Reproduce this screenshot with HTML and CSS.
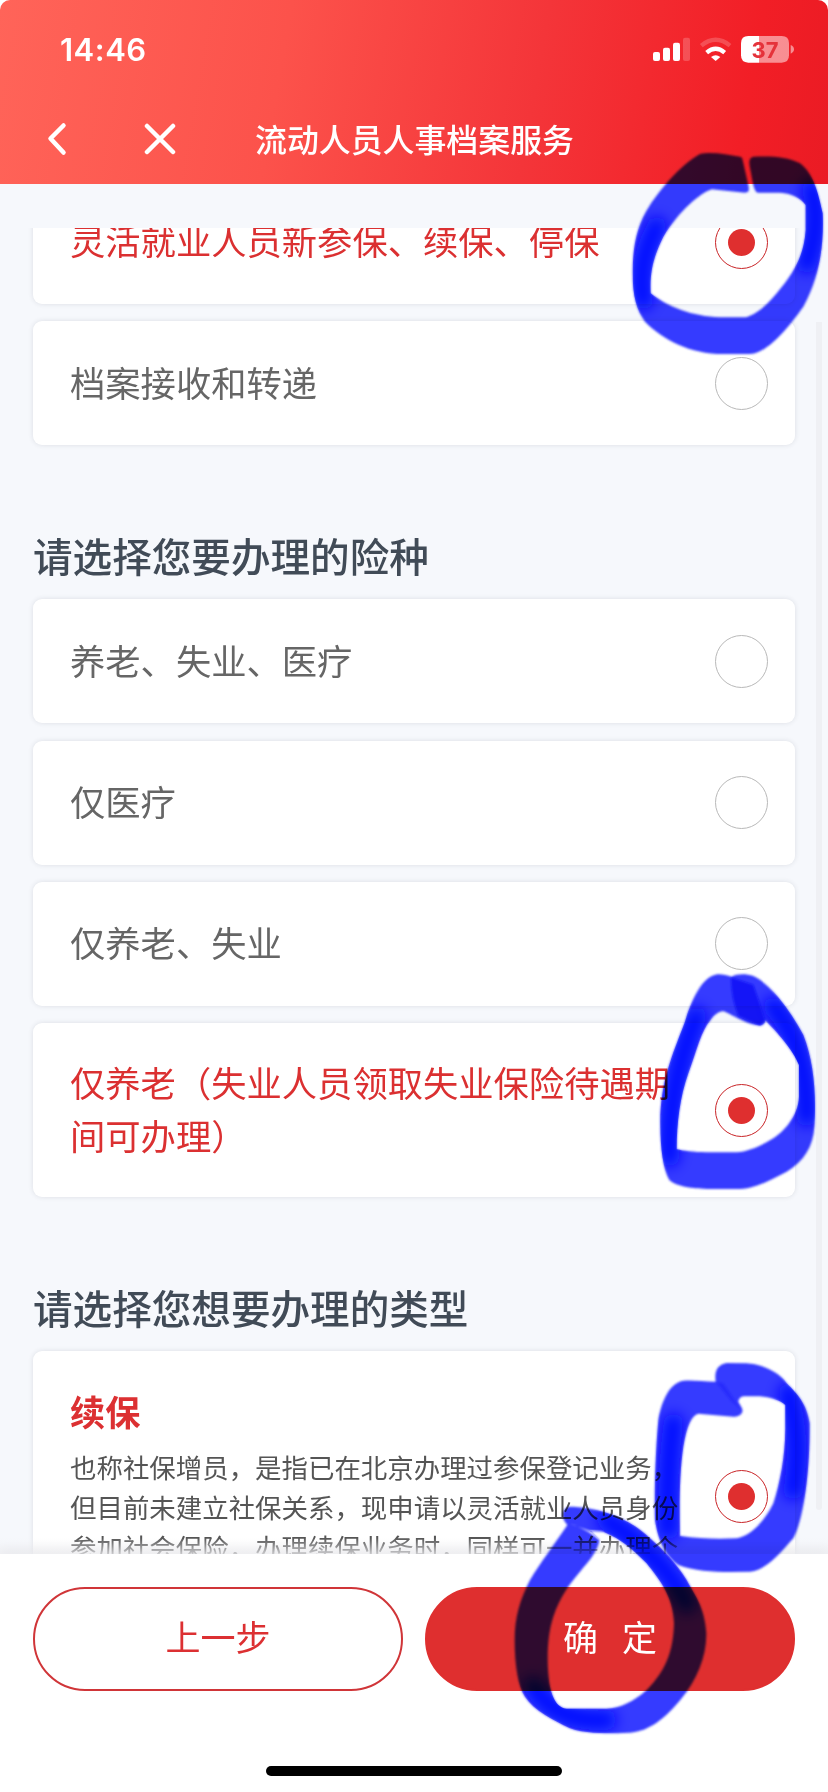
FILE: index.html
```html
<!DOCTYPE html>
<html lang="zh-CN">
<head>
<meta charset="utf-8">
<title>流动人员人事档案服务</title>
<link rel="stylesheet" href="styles.css">
</head>
<body>
<div class="screen">
  <header class="header">
    <div class="status">
      <span class="time">14:46</span>
      <svg class="status-icons" viewBox="0 0 429 90" width="143" height="30">
        <g fill="#fff">
          <rect x="0" y="51" width="21" height="27" rx="6"/>
          <rect x="30" y="38" width="21" height="40" rx="6"/>
          <rect x="60" y="23" width="21" height="55" rx="6"/>
          <rect x="90" y="8" width="21" height="70" rx="6" opacity=".2"/>
          <path d="M188 78 L174 66 Q188 55 202 66Z"/>
        </g>
        <g fill="none" stroke="#fff" stroke-width="13">
          <path d="M161 53 Q188 30 215 53"/>
          <path d="M145 32 Q188 -3 231 32" opacity=".2"/>
        </g>
        <path d="M286 3 H318 V83 H286 Q264 83 264 61 V25 Q264 3 286 3Z" fill="#fff"/>
        <path d="M318 3 H386 Q408 3 408 25 V61 Q408 83 386 83 H318Z" fill="#fff" opacity=".5"/>
        <path d="M413 30 Q423 34 423 43 Q423 52 413 56Z" fill="#fff" opacity=".5"/>
        <text class="battery-level" x="336" y="68" text-anchor="middle">37</text>
      </svg>
    </div>
    <nav class="navbar">
      <div class="nav-actions">
        <svg class="back" viewBox="0 0 20 34" width="20" height="34"><path d="M16.500 3.500 L3.500 16.500 L16.500 30.500"/></svg>
        <svg class="close" viewBox="0 0 32 32" width="32" height="32"><path d="M3 3 L29 29 M29 3 L3 29"/></svg>
      </div>
      <h1 class="title">流动人员人事档案服务</h1>
    </nav>
  </header>

  <main class="scroll">
    <section class="options">
      <div class="card"><p class="label on">灵活就业人员新参保、续保、停保</p><i class="radio checked"></i></div>
      <div class="card"><p class="label">档案接收和转递</p><i class="radio"></i></div>
    </section>
    <h2 class="heading">请选择您要办理的险种</h2>
    <section class="options">
      <div class="card"><p class="label">养老、失业、医疗</p><i class="radio"></i></div>
      <div class="card"><p class="label">仅医疗</p><i class="radio"></i></div>
      <div class="card"><p class="label">仅养老、失业</p><i class="radio"></i></div>
      <div class="card tall"><p class="label on">仅养老（失业人员领取失业保险待遇期间可办理）</p><i class="radio checked"></i></div>
    </section>
    <h2 class="heading">请选择您想要办理的类型</h2>
    <section class="options">
      <div class="card detail">
        <div class="copy">
          <h3 class="subtitle">续保</h3>
          <p class="desc">也称社保增员，是指已在北京办理过参保登记业务，<br>但目前未建立社保关系，现申请以灵活就业人员身份<br>参加社会保险，办理续保业务时，同样可一并办理个</p>
        </div>
        <i class="radio checked"></i>
      </div>
    </section>
    <div class="scrollbar"></div>
  </main>

  <footer class="footer">
    <div class="buttons">
      <button class="btn outline">上一步</button>
      <button class="btn solid">确<span class="space"></span>定</button>
    </div>
    <div class="home"></div>
  </footer>

  <svg class="marker" viewBox="0 0 828 1792" width="828" height="1792">
    <defs>
      <filter id="soft" x="-5%" y="-5%" width="110%" height="110%"><feGaussianBlur stdDeviation="2.500"/></filter>
      <filter id="wide" filterUnits="userSpaceOnUse" x="-50" y="-50" width="850" height="900"><feGaussianBlur stdDeviation="20"/></filter>
      <path id="ring1" d="M420 80 C380 72 330 64 300 72 C240 105 180 180 150 225 C110 285 98 350 98 430 C98 500 110 540 135 575 C190 630 270 672 370 672 L450 672 C500 670 560 600 610 530 C660 440 672 340 668 250 C655 190 640 130 600 100 C560 80 520 78 460 80 C440 85 450 110 455 140 C460 170 465 188 475 188 L540 188 C575 190 605 205 617 225 L617 300 C612 380 580 430 530 490 C490 540 450 562 430 562 L360 562 C280 560 200 530 152 490 C148 420 165 370 190 320 C240 240 300 190 335 178 L435 188 C448 188 448 180 445 165 L428 90 Q426 80 420 80Z"/>
      <path id="ring2" d="M262 73 C215 80 185 150 165 215 C125 320 90 400 91 520 C91 600 100 660 118 690 C140 712 200 717 250 717 L330 717 C380 715 420 690 470 665 C520 635 550 590 553 530 C560 430 550 330 520 255 C480 180 420 100 370 78 C345 70 320 72 305 80 C290 75 275 72 262 73Z M280 184 C300 190 350 225 390 227 C400 225 408 218 405 210 C440 245 490 300 507 345 L507 440 C505 500 460 545 430 565 C390 590 350 606 320 607 L230 607 C190 606 160 603 140 598 C140 520 150 440 175 370 C200 300 215 240 240 212 C255 190 270 184 280 184Z"/>
      <path id="ring3" d="M190 122 C150 128 125 180 115 240 C105 350 103 480 105 540 C115 610 140 650 175 675 C220 692 280 696 330 696 L390 695 C440 690 480 640 520 595 C550 540 570 400 569 250 C560 190 530 160 500 130 C470 85 410 72 380 70 L320 69 C290 75 283 95 287 125 C250 124 220 120 190 122Z M235 221 L340 230 C360 232 372 218 366 205 L355 185 C358 172 365 169 375 169 L420 169 C450 172 480 180 496 195 L496 270 C495 350 480 430 460 490 C430 550 390 588 350 595 C290 598 240 596 180 588 C178 500 178 400 190 320 C200 260 215 225 235 221Z"/>
      <path id="ring4" d="M235 50 C215 60 210 80 232 105 C195 160 150 220 120 270 C90 330 74 380 74 450 C74 530 85 590 105 620 C130 660 190 690 240 715 C280 730 340 730 380 730 L420 728 C480 725 530 680 575 625 C620 570 650 500 649 430 C645 350 610 310 590 270 C555 215 520 180 480 145 C430 95 340 50 235 50Z M300 123 L340 125 C400 150 430 180 470 220 C510 270 550 320 552 400 C550 480 530 540 470 600 C430 635 390 655 350 656 L230 656 C200 655 185 620 178 580 C170 520 170 440 190 380 C210 320 240 280 270 245 C300 210 325 180 328 150 Z"/>
      <clipPath id="clip1"><use href="#ring1"/></clipPath>
      <clipPath id="clip2"><use href="#ring2" clip-rule="evenodd"/></clipPath>
      <clipPath id="clip3"><use href="#ring3" clip-rule="evenodd"/></clipPath>
      <clipPath id="clip4"><use href="#ring4" clip-rule="evenodd"/></clipPath>
    </defs>
    <g transform="translate(600 130) scale(.33333)">
      <use href="#ring1" class="ink" filter="url(#soft)"/>
      <g clip-path="url(#clip1)"><path class="dense" d="M170 290 Q110 400 130 510 M635 180 Q665 280 620 400" filter="url(#wide)"/></g>
    </g>
    <g transform="translate(630 950) scale(.33333)">
      <use href="#ring2" class="ink" filter="url(#soft)"/>
      <g clip-path="url(#clip2)">
        <path class="dense" d="M200 200 Q115 400 118 620 M430 170 Q530 280 530 500" filter="url(#wide)"/>
        <path class="overlap" d="M303 82 L370 104 Q390 160 405 210 L390 227 L325 198 Q302 140 303 82Z" filter="url(#soft)"/>
      </g>
    </g>
    <g transform="translate(620 1340) scale(.33333)">
      <use href="#ring3" class="ink" filter="url(#soft)"/>
      <g clip-path="url(#clip3)">
        <path class="dense" d="M160 250 Q140 400 145 570 M505 160 Q545 300 520 450" filter="url(#wide)"/>
        <path class="overlap faint" d="M287 125 L310 130 L365 210 L335 185Z" filter="url(#soft)"/>
      </g>
    </g>
    <g transform="translate(490 1490) scale(.33333)">
      <use href="#ring4" class="ink" filter="url(#soft)"/>
      <g clip-path="url(#clip4)">
        <path class="dense" d="M350 90 Q520 200 590 340 M130 590 Q200 700 350 690" filter="url(#wide)"/>
        <path class="gap" d="M238 101 Q270 107 328 148 L340 125 L300 122Z" filter="url(#soft)"/>
      </g>
    </g>
  </svg>
</div>
</body>
</html>
```
FILE: styles.css
```css
* { box-sizing: border-box; }
body { margin: 0; background: #fff; font-family: "Noto Sans CJK SC", sans-serif; }
h1, h2, h3, p { margin: 0; font-weight: 400; }

.screen {
  position: relative;
  isolation: isolate;
  width: 828px;
  height: 1792px;
  overflow: hidden;
  display: flex;
  flex-direction: column;
  background: #f6f8fc;
}

.header {
  flex: none;
  height: 184px;
  border-radius: 10px 10px 0 0;
  background: linear-gradient(100deg, #ff6459 0%, #fc524b 34%, #f43539 64%, #f21e26 89%, #ea1b24 100%);
  box-shadow: 0 -12px 0 #fff;
  color: #fff;
}
.status {
  height: 94px;
  padding: 6px 32px 0 60px;
  display: flex;
  align-items: center;
  justify-content: space-between;
}
.time { font: 600 31px/40px Inter, sans-serif; letter-spacing: .5px; }
.status-icons { margin-right: 0; }
.battery-level { font: 700 66px Inter, sans-serif; fill: #e5323a; }
.navbar {
  height: 90px;
  display: grid;
  grid-template-columns: 255px 1fr;
  align-items: center;
}
.nav-actions {
  display: flex;
  align-items: center;
  gap: 77px;
  padding: 0 0 0 47px;
}
.nav-actions path { fill: none; stroke: #fff; stroke-width: 4.500; stroke-linecap: round; stroke-linejoin: round; }
.title { font-size: 31.900px; line-height: 44px; font-weight: 500; padding-bottom: 3px; }

.scroll {
  position: relative;
  flex: none;
  height: 1326px;
  margin-top: 44px;
  padding: 0 33px;
  overflow: hidden;
}
.options { display: flex; flex-direction: column; gap: 17.300px; }
.scroll > .options:first-child { margin-top: -48px; }
.card {
  height: 124px;
  flex: none;
  padding: 0 27px 0 37px;
  display: flex;
  align-items: center;
  justify-content: space-between;
  border-radius: 9px;
  background: #fff;
  box-shadow: 0 0 5px rgba(50, 55, 70, .13);
}
.tall { height: 174px; }
.label { width: 603px; padding-bottom: 3px; color: #666; font-size: 35.300px; line-height: 52.500px; }
.label.on { color: #db3031; }
.radio {
  width: 53px;
  height: 53px;
  flex: none;
  display: grid;
  place-items: center;
  border: 1px solid #b9b9b9;
  border-radius: 50%;
}
.radio.checked { border-color: #c92427; }
.radio.checked::before { content: ""; width: 27px; height: 27px; border-radius: 50%; background: #df2f2f; }
.heading {
  height: 154px;
  padding-top: 82px;
  font-size: 39.600px;
  line-height: 56px;
  font-weight: 500;
  color: #414b57;
}
.detail { height: 290px; }
.copy { width: 620px; align-self: flex-start; padding-top: 34px; }
.subtitle { font-size: 35.200px; line-height: 52px; font-weight: 700; color: #dc3032; }
.desc { margin-top: 10px; font-size: 26.450px; line-height: 40px; color: #555; white-space: nowrap; }
.scrollbar {
  position: absolute;
  top: 94px;
  right: 6px;
  width: 6px;
  height: 1188px;
  border-radius: 0 0 3px 3px;
  background: #eff0f4;
}

.footer {
  position: relative;
  flex: none;
  height: 238px;
  padding: 33px 33px 0;
  background: #fff;
  box-shadow: 0 -2px 10px rgba(40, 40, 50, .14);
}
.footer::before {
  content: "";
  position: absolute;
  left: 0;
  right: 0;
  top: -16px;
  height: 16px;
  background: linear-gradient(rgba(240, 240, 243, 0), rgba(240, 240, 243, .75));
}
.buttons { display: grid; grid-template-columns: 1fr 1fr; gap: 22px; }
.btn {
  height: 104px;
  padding: 0 0 6px;
  border: 2px solid #d03538;
  border-radius: 52px;
  font: 400 35px/48px "Noto Sans CJK SC", sans-serif;
}
.outline { color: #dc3032; background: #fff; }
.solid { color: #fff; background: #df2f2f; border-color: #df2f2f; }
.space { display: inline-block; width: 24px; }
.home { width: 296px; height: 10px; margin: 75px auto 0; border-radius: 5px; background: #000; }

.marker { position: absolute; inset: 0; mix-blend-mode: multiply; pointer-events: none; }
.ink { fill: #343bff; fill-rule: evenodd; }
.dense { fill: none; stroke: #0008ff; stroke-width: 60; stroke-linecap: round; }
.overlap { fill: #0a10f5; opacity: .8; }
.overlap.faint { opacity: .3; }
.gap { fill: #fff; opacity: .75; }
```
